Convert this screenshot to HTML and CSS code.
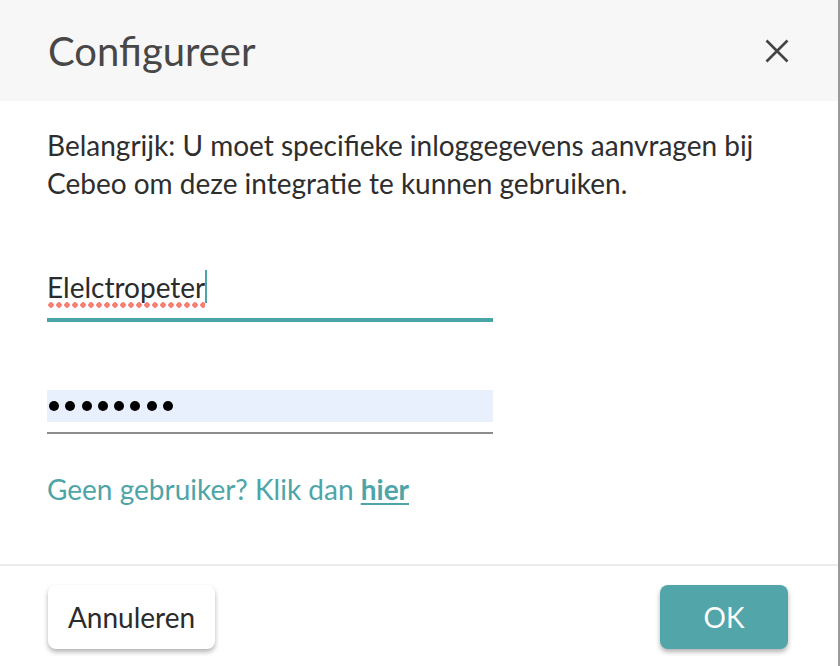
FILE: index.html
```html
<!DOCTYPE html>
<html lang="nl">
<head>
<meta charset="utf-8">
<title>Configureer</title>
<link rel="stylesheet" href="styles.css">
</head>
<body>
<div class="dialog">
  <header class="dialog-header">
    <h1 class="dialog-title">Configureer</h1>
    <button class="close-btn" aria-label="Sluiten">
      <svg width="24" height="24" viewBox="0 0 24 24"><path d="M1.5 1.5 L22.5 22.5 M22.5 1.5 L1.5 22.5" stroke="#444" stroke-width="2.6" fill="none"/></svg>
    </button>
  </header>
  <main class="dialog-body">
    <p class="notice">Belangrijk: U moet specifieke inloggegevens aanvragen bij Cebeo om deze integratie te kunnen gebruiken.</p>
    <div class="field field-active">
      <span class="field-value"><span class="misspelled">Elelctropeter</span><span class="caret"></span></span>
    </div>
    <div class="field field-password">
      <span class="field-value dots"><i></i><i></i><i></i><i></i><i></i><i></i><i></i><i></i></span>
    </div>
    <p class="signup">Geen gebruiker? Klik dan <a href="#" class="signup-link">hier</a></p>
  </main>
  <footer class="dialog-footer">
    <button class="btn btn-secondary">Annuleren</button>
    <button class="btn btn-primary">OK</button>
  </footer>
</div>
</body>
</html>
```

FILE: styles.css
```css
* { box-sizing: border-box; }
html, body { margin: 0; padding: 0; background: #fff; }
body {
  font-family: Lato, "Open Sans", sans-serif;
  width: 840px;
  height: 666px;
  overflow: hidden;
}
.dialog {
  width: 840px;
  height: 666px;
  border-right: 2px solid #9a9a9a;
  display: flex;
  flex-direction: column;
  background: #fff;
}
.dialog-header {
  height: 101px;
  background: #f7f7f7;
  display: flex;
  align-items: center;
  justify-content: space-between;
  padding: 0 49px 0 48px;
}
.dialog-title {
  margin: 0;
  font-weight: 400;
  font-size: 40px;
  color: #474747;
  letter-spacing: 0;
}
.close-btn {
  border: 0;
  background: none;
  padding: 0;
  width: 24px;
  height: 24px;
  display: flex;
}
.dialog-body {
  padding: 25px 40px 0 47px;
  flex: 1;
}
.notice {
  margin: 0;
  font-size: 28px;
  line-height: 38px;
  color: #2e2e2e;
}
.field {
  width: 446px;
  display: flex;
  align-items: center;
}
.field-active {
  margin-top: 66px;
  border-bottom: 4px solid #4ba5a6;
  height: 54px;
  align-items: flex-start;
  padding-top: 2px;
}
.field-value {
  font-size: 28px;
  color: #2b2b2b;
  display: flex;
  align-items: center;
  position: relative;
}
.misspelled {
  padding-bottom: 6px;
  background-image: radial-gradient(circle, #f47f72 2.5px, transparent 3px);
  background-size: 8px 6px;
  background-repeat: repeat-x;
  background-position: 0 calc(100% - 2px);
  line-height: 34px;
}
.caret {
  display: inline-block;
  width: 2px;
  height: 33px;
  margin-top: -7px;
  background: #4ba5a6;
}
.field-password {
  margin-top: 68px;
  height: 32px;
  background: #e8f0fe;
  position: relative;
  padding-left: 2px;
}
.field-password::after {
  content: "";
  position: absolute;
  left: 0;
  right: 0;
  top: 42px;
  height: 2px;
  background: #8c8c8c;
}
.dots { gap: 6.3px; }
.dots i {
  width: 10px;
  height: 10px;
  border-radius: 50%;
  background: #000;
  display: block;
}
.signup {
  margin: 50px 0 0;
  font-size: 28px;
  color: #4ea5a8;
}
.signup-link {
  color: #4ea5a8;
  font-weight: 700;
  text-decoration: underline;
  text-underline-offset: 3px;
  text-decoration-thickness: 2px;
}
.dialog-footer {
  border-top: 2px solid #ececec;
  height: 102px;
  display: flex;
  justify-content: space-between;
  align-items: flex-start;
  padding: 19px 50px 0 48px;
}
.btn {
  font-family: Lato, "Open Sans", sans-serif;
  font-size: 28px;
  height: 64px;
  border: 0;
  border-radius: 8px;
  cursor: pointer;
  box-shadow: 0 3px 5px rgba(0,0,0,0.3);
}
.btn-secondary {
  width: 167px;
  background: #fff;
  color: #2b2b2b;
}
.btn-primary {
  width: 128px;
  background: #52a5a8;
  color: #fff;
}
```
